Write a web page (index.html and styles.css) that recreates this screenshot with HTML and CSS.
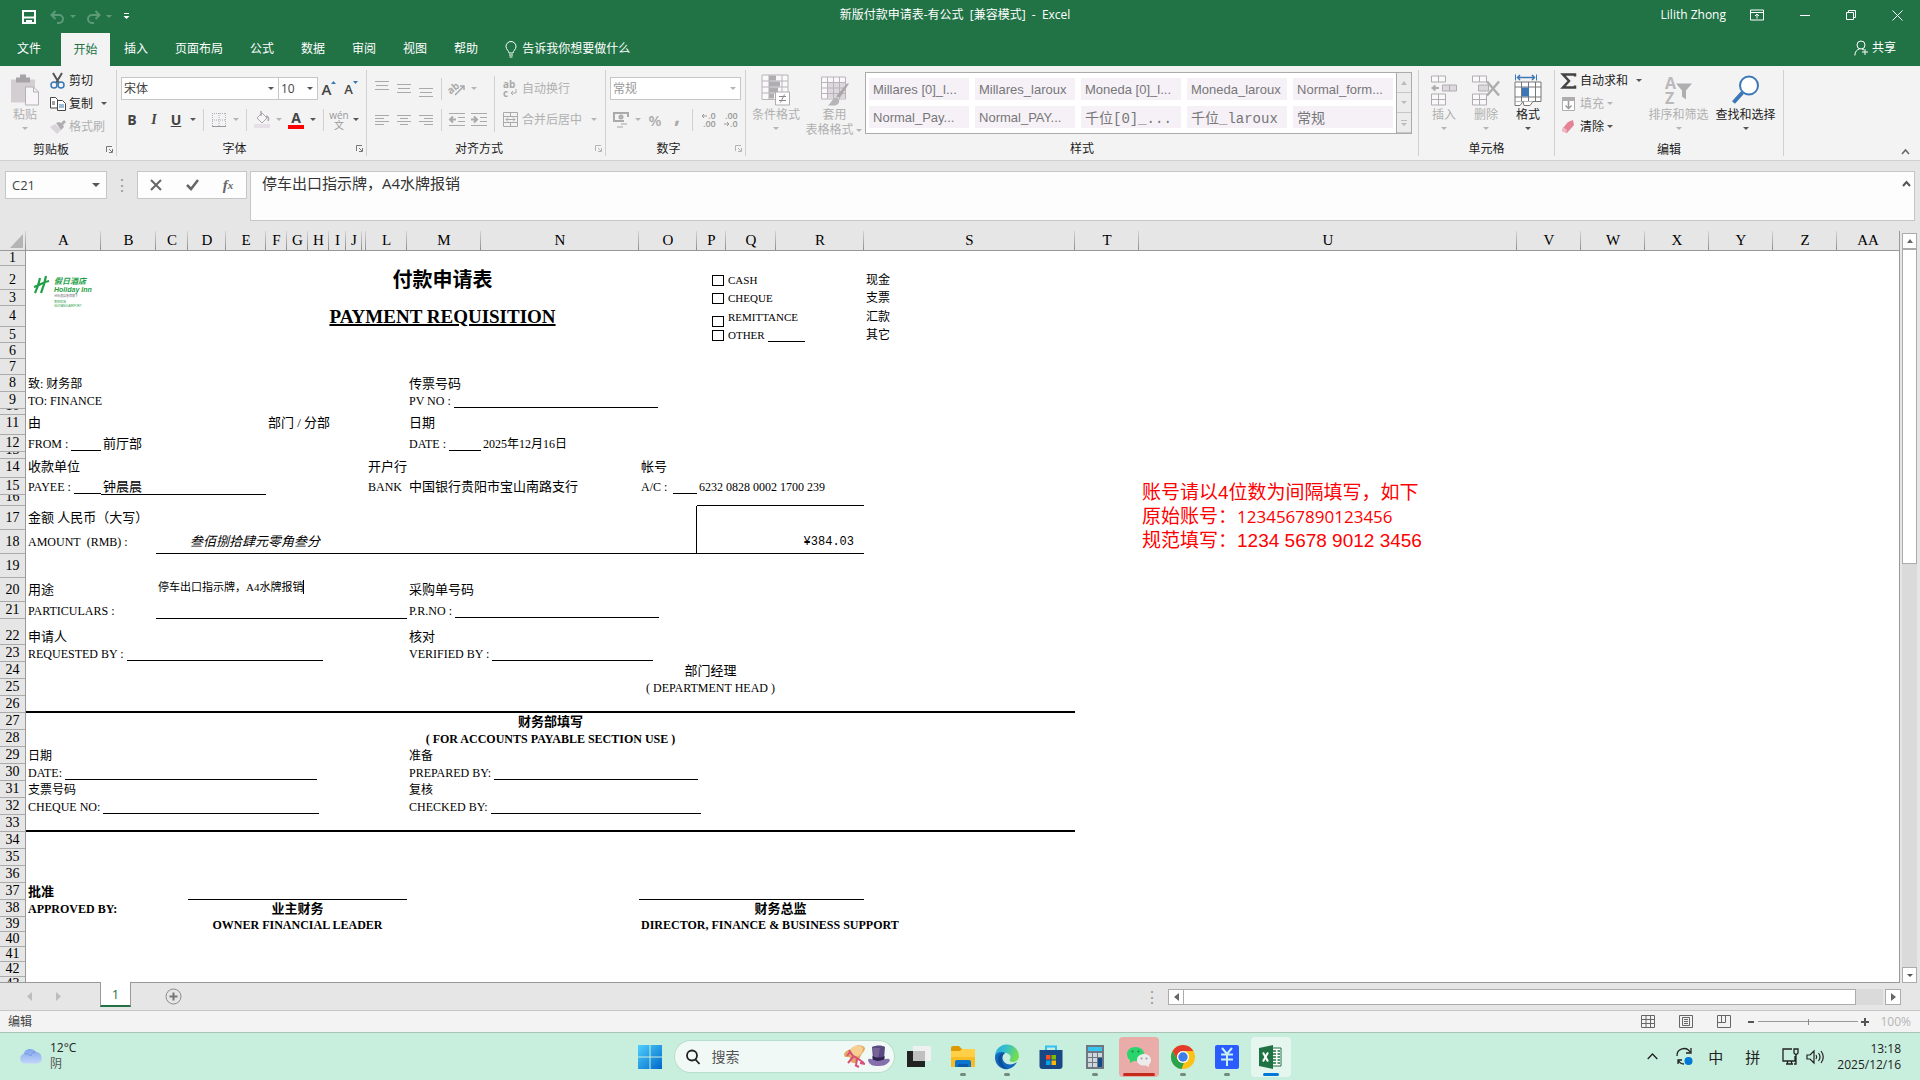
FILE: index.html
```html
<!DOCTYPE html>
<html lang="zh-CN">
<head>
<meta charset="utf-8">
<title>新版付款申请表-有公式 [兼容模式] - Excel</title>
<link rel="stylesheet" href="styles.css">
</head>
<body>
<header class="titlebar">
  <div class="quick">
    <button class="plain" aria-label="保存"><svg width="14" height="14" viewBox="0 0 14 14"><path d="M1 1h12v12H1z" fill="none" stroke="#fff" stroke-width="2"/><path d="M2 7.500h10" stroke="#fff" stroke-width="2"/><path d="M4 10h6v4H8v-2H6v2H4z" fill="#fff"/></svg></button>
    <button class="plain dim" aria-label="撤消"><svg width="15" height="14" viewBox="0 0 15 14"><path d="M5.500 1 1.500 5l4 4M2 5h7a4 4 0 0 1 0 8H7" fill="none" stroke="#5c9a78" stroke-width="2"/></svg><i class="ar"></i></button>
    <button class="plain dim" aria-label="恢复"><svg width="15" height="14" viewBox="0 0 15 14"><path d="m9.500 1 4 4-4 4M13 5H6a4 4 0 0 0 0 8h2" fill="none" stroke="#5c9a78" stroke-width="2"/></svg><i class="ar"></i></button>
    <button class="plain custom" aria-label="自定义快速访问工具栏"><svg width="7" height="7" viewBox="0 0 7 7"><path d="M1 .5h5" stroke="#fff"/><path d="M.5 3h6L3.500 6z" fill="#fff"/></svg></button>
  </div>
  <h1>新版付款申请表-有公式&nbsp; [兼容模式]&nbsp; -&nbsp; Excel</h1>
  <div class="window">
    <span>Lilith Zhong</span>
    <button class="plain" aria-label="功能区显示选项"><svg width="14" height="12" viewBox="0 0 14 12" fill="none" stroke="#fff"><path d="M.5 1h13v10H.5zM.5 3.500h13M7 9.500V5M5 7l2-2 2 2"/></svg></button>
    <button class="plain" aria-label="最小化"><svg width="10" height="10"><path d="M0 5.500h10" stroke="#fff"/></svg></button>
    <button class="plain" aria-label="还原"><svg width="10" height="10" fill="none" stroke="#fff"><path d="M.5 2.500h7v7h-7zM2.500 2V.5h7v7H8"/></svg></button>
    <button class="plain" aria-label="关闭"><svg width="11" height="11"><path d="m.5.5 10 10M10.500.5l-10 10" stroke="#fff"/></svg></button>
  </div>
</header>

<nav class="tabs">
  <button>文件</button><button class="on">开始</button><button>插入</button><button>页面布局</button><button>公式</button><button>数据</button><button>审阅</button><button>视图</button><button>帮助</button>
  <button class="tell"><svg width="12" height="17" viewBox="0 0 12 17" fill="none" stroke="#fff"><path d="M4 12c0-2-3-3.500-3-6.500a5 5 0 0 1 10 0C11 8.500 8 10 8 12zM4 14h4M4.500 16h3"/></svg>告诉我你想要做什么</button>
  <button class="share"><svg width="15" height="16" viewBox="0 0 15 16" fill="none" stroke="#fff"><circle cx="7" cy="5" r="4"/><path d="M.8 15.500C1 11.500 3 9.500 5.500 9M8 9l2 1M11 9v6M8 12h6"/></svg>共享</button>
</nav>

<section class="ribbon">
  <div class="group">
    <div class="body clip">
      <button class="big off paste"><svg width="28" height="32" viewBox="0 0 28 32"><path d="M0 5h24v23H0z" fill="#d2ced2"/><path d="M5 3h4V0h6v3h4v5H5z" fill="#a6a4a6"/><path d="M14.500 12.500h8l5 5v13h-13z" fill="#f8f5f9" stroke="#b4b1b5"/><path d="M22.500 12.500v5h5" fill="none" stroke="#b4b1b5"/></svg><span>粘贴</span><i class="ar"></i></button>
      <div class="stack">
        <button class="row"><svg width="16" height="16" viewBox="0 0 16 16" fill="none"><path d="m3 0 6 10M12 0 6 10" stroke="#555" stroke-width="2"/><circle cx="4" cy="12" r="3" stroke="#3b78b5" stroke-width="1.500"/><circle cx="11" cy="12" r="3" stroke="#3b78b5" stroke-width="1.500"/></svg>剪切</button>
        <button class="row"><svg width="16" height="14" viewBox="0 0 16 14" fill="#fff" stroke="#444"><path d="M.5.5h5l2 2V11H.5zM2 5h3M2 7h3M7.500 3.500h5l3 3v7h-8z"/><path d="M9 8h5M9 10h5" stroke="#3b78b5"/></svg>复制<i class="ar wide"></i></button>
        <button class="row off"><svg width="16" height="14" viewBox="0 0 16 14"><path d="m0 7 5-3 6 6-4 4z" fill="#d9d4da"/><path d="m6 3 3-1 2 1 3-3 2 2-3 3 1 2-3 3z" fill="#b0aeb0"/></svg>格式刷</button>
      </div>
    </div>
    <div class="label"><span>剪贴板</span><button class="launch" aria-label="剪贴板设置"><svg width="7" height="7"><use href="#launch"/></svg></button></div>
  </div>

  <div class="group">
    <div class="body two">
      <div class="line"><span class="combo font"><select aria-label="字体"><option>宋体</option></select><i class="ar"></i></span><span class="combo size"><select aria-label="字号"><option>10</option></select><i class="ar"></i></span>
        <button class="ib" aria-label="增大字号"><span class="grow">A</span><svg width="5" height="3"><path d="M0 3h5L2.500 0z" fill="#3b78b5"/></svg></button>
        <button class="ib" aria-label="减小字号"><span class="shrink">A</span><svg width="5" height="3"><path d="M0 0h5L2.500 3z" fill="#3b78b5"/></svg></button></div>
      <div class="line"><button class="ib b">B</button><button class="ib it">I</button><button class="ib u">U</button><i class="ar"></i><i class="sep"></i>
        <button class="ib" aria-label="边框"><svg width="14" height="14" fill="none" stroke="#b4aeb8" stroke-dasharray="1 1"><path d="M.5 0v13M7 0v13M13.500 0v13M0 .5h14M0 7h14"/><path d="M0 13.500h14" stroke-dasharray="none" stroke="#9a979b"/></svg></button><i class="ar off"></i><i class="sep"></i>
        <button class="ib" aria-label="填充颜色"><svg width="17" height="17" viewBox="0 0 17 17"><path d="M3 7 8 2l5 5-5 5z" fill="#f8f5f9" stroke="#aaa7aa"/><path d="M7 5V0M12 5c3 1 3 3 2 5" fill="none" stroke="#aaa7aa" stroke-width="1.500"/><path d="M0 13h16v4H0z" fill="#e6dfe8"/></svg></button><i class="ar off"></i>
        <button class="ib" aria-label="字体颜色"><span class="fc">A</span></button><i class="ar"></i><i class="sep"></i>
        <button class="ib wen"><span>wén</span><span>文</span></button><i class="ar"></i></div>
    </div>
    <div class="label"><span>字体</span><button class="launch" aria-label="字体设置"><svg width="7" height="7"><use href="#launch"/></svg></button></div>
  </div>

  <div class="group">
    <div class="body cols off">
      <div class="two">
        <div class="line"><button class="ib" aria-label="顶端对齐"><svg width="14" height="16" stroke="#aaa"><path d="M0 .5h14M1 4.500h12M0 8.500h14"/></svg></button><button class="ib" aria-label="垂直居中"><svg width="14" height="16" stroke="#aaa"><path d="M0 3.500h14M1 7.500h12M0 11.500h14"/></svg></button><button class="ib" aria-label="底端对齐"><svg width="14" height="16" stroke="#aaa"><path d="M0 7.500h14M1 11.500h12M0 15.500h14"/></svg></button><i class="sep"></i>
          <button class="ib" aria-label="方向"><svg width="17" height="15" viewBox="0 0 17 15"><text x="-2" y="10" font-size="10" font-weight="700" fill="#aaa" transform="rotate(-40 5 7)">ab</text><path d="m6 14 9-9M11 5h4v4" fill="none" stroke="#aaa" stroke-width="1.500"/></svg></button><i class="ar"></i></div>
        <div class="line"><button class="ib" aria-label="左对齐"><svg width="14" height="12" stroke="#aaa"><path d="M0 1.500h14M0 4.500h9M0 7.500h14M0 10.500h9"/></svg></button><button class="ib" aria-label="居中"><svg width="14" height="12" stroke="#aaa"><path d="M0 1.500h14M3 4.500h8M0 7.500h14M3 10.500h8"/></svg></button><button class="ib" aria-label="右对齐"><svg width="14" height="12" stroke="#aaa"><path d="M0 1.500h14M5 4.500h9M0 7.500h14M5 10.500h9"/></svg></button><i class="sep"></i>
          <button class="ib" aria-label="减少缩进"><svg width="16" height="14" stroke="#aaa" fill="none"><path d="M0 .5h16M9 4.500h7M9 8.500h7M0 12.500h16"/><path d="M7 6.500H1M4 3.500l-3 3 3 3" stroke-width="2"/></svg></button><button class="ib" aria-label="增加缩进"><svg width="16" height="14" stroke="#aaa" fill="none"><path d="M0 .5h16M9 4.500h7M9 8.500h7M0 12.500h16"/><path d="M0 6.500h6M3 3.500l3 3-3 3" stroke-width="2"/></svg></button></div>
      </div>
      <i class="sep tall"></i>
      <div class="two">
        <div class="line"><button class="row"><svg width="15" height="16" viewBox="0 0 15 16"><text x="0" y="7" font-size="10" font-weight="700" fill="#aaa">ab</text><text x="0" y="16" font-size="10" font-weight="700" fill="#aaa">c</text><path d="M13 8v4H8M10 10l-2 2 2 2" fill="none" stroke="#aaa"/></svg>自动换行</button></div>
        <div class="line"><button class="row"><svg width="15" height="15" fill="none" stroke="#aaa"><path d="M.5.5h14v14H.5zM.5 4.500h14M.5 10.500h14M7.500.5v4M7.500 10.500v4M3 7.500h9M5 5.500l-2 2 2 2M10 5.500l2 2-2 2"/></svg>合并后居中<i class="ar wide"></i></button></div>
      </div>
    </div>
    <div class="label"><span>对齐方式</span><button class="launch off" aria-label="对齐设置"><svg width="7" height="7"><use href="#launch"/></svg></button></div>
  </div>

  <div class="group">
    <div class="body two off">
      <div class="line"><span class="combo num"><select aria-label="数字格式"><option>常规</option></select><i class="ar"></i></span></div>
      <div class="line"><button class="ib" aria-label="会计数字格式"><svg width="16" height="16" viewBox="0 0 16 16" fill="none" stroke="#aaa" stroke-width="2"><path d="M11 9H1V1h14v4"/><circle cx="8" cy="5" r="1.500"/><path d="M8 12h6M4 15h6" stroke="#ccc"/></svg></button><i class="ar"></i><button class="ib pct">%</button><button class="ib comma">,</button><i class="sep"></i>
        <button class="ib" aria-label="增加小数位数"><svg width="15" height="16" viewBox="0 0 15 16"><text x="7" y="7" font-size="9" font-weight="600" fill="#999">.0</text><text x="2" y="15" font-size="9" font-weight="600" fill="#999">.00</text><path d="M6 4H1M3 2 1 4l2 2" fill="none" stroke="#999"/></svg></button><button class="ib" aria-label="减少小数位数"><svg width="15" height="16" viewBox="0 0 15 16"><text x="2" y="7" font-size="9" font-weight="600" fill="#999">.00</text><text x="7" y="15" font-size="9" font-weight="600" fill="#999">.0</text><path d="M1 12h5M4 10l2 2-2 2" fill="none" stroke="#999"/></svg></button></div>
    </div>
    <div class="label"><span>数字</span><button class="launch off" aria-label="数字设置"><svg width="7" height="7"><use href="#launch"/></svg></button></div>
  </div>

  <div class="group">
    <div class="body">
      <button class="big off cond"><svg width="30" height="32" viewBox="0 0 30 32"><path d="M1 .5h26V25H1zM1 6.500h26M1 12.500h26M1 18.500h26M8 .5V25M21 .5V25" fill="#faf8fb" stroke="#b8b4b9"/><path d="M8 1h7v5H8zM8 7h11v5H8zM8 13h9v5H8zM8 19h5v5H8z" fill="#b0adb1"/><path d="M14.500 17.500h14v13h-14z" fill="#fff" stroke="#b0adb1"/><path d="M18 22h7M18 26h7M23.500 20l-4 8" stroke="#888"/></svg><span>条件格式</span><i class="ar"></i></button>
      <button class="big off tbl"><svg width="30" height="32" viewBox="0 0 30 32"><path d="M1.500 2.500h24v22h-24z" fill="#faf8fb" stroke="#b8b4b9"/><path d="M8 8h17v16H8z" fill="#dcd8dd"/><path d="M1.500 8h24M1.500 13.500h24M1.500 19h24M7.500 2.500v22M13.500 2.500v22M19.500 2.500v22" stroke="#b8b4b9"/><path d="m29 9-9 14-4-1L27 9z" fill="#aaa7ab"/><path d="M8 31c3-2 4-7 8-8 5 1 4 7-1 8z" fill="#b8b5b9"/></svg><span>套用</span><span>表格格式<i class="ar"></i></span></button>
      <div class="gallery">
        <div class="styles"><button>Millares [0]_l...</button><button>Millares_laroux</button><button>Moneda [0]_l...</button><button>Moneda_laroux</button><button>Normal_form...</button><button>Normal_Pay...</button><button>Normal_PAY...</button><button class="song">千位[0]_...</button><button class="song">千位_laroux</button><button class="song">常规</button></div>
        <div class="scrolls"><button aria-label="上一行"><i class="ar up"></i></button><button aria-label="下一行"><i class="ar"></i></button><button aria-label="其他"><i class="ar over"></i></button></div>
      </div>
    </div>
    <div class="label"><span>样式</span></div>
  </div>

  <div class="group">
    <div class="body cells">
      <button class="big off"><svg width="26" height="30" viewBox="0 0 26 30" fill="#faf8fb" stroke="#b0adb1"><path d="M.5.5h14v6H.5zM7.500.5v6M.5 18.500h14v11H.5zM7.500 18.500v11M.5 24h14"/><path d="M11.500 9.500h14v6h-14zM18.500 9.500v6" fill="#dcd8dd"/><path d="M8 12.500H2M4.500 10l-3 2.500 3 2.500" fill="none" stroke-width="2"/></svg><span>插入</span><i class="ar"></i></button>
      <button class="big off"><svg width="28" height="30" viewBox="0 0 28 30" fill="#faf8fb" stroke="#b0adb1"><path d="M.5.5h14v6H.5zM7.500.5v6M.5 18.500h14v11H.5zM7.500 18.500v11M.5 24h14"/><path d="M6.500 9.500h10v6h-10z" fill="#dcd8dd"/><path d="m15 6 12 14M27 6 15 20" stroke-width="2.500"/></svg><span>删除</span><i class="ar"></i></button>
      <button class="big"><svg width="28" height="32" viewBox="0 0 28 32"><path d="M1.500 0v6M22.500 0v6" stroke="#3b78b5"/><path d="M3 3h18M6 .5 3.500 3 6 5.500M18 .5 20.500 3 18 5.500" fill="none" stroke="#3b78b5" stroke-width="1.500"/><path d="M1 7.500h26v19.500H1zM1 12.500h26M1 22.500h26M7.500 7.500V27M14.500 7.500V27M21.500 7.500V27" fill="#fff" stroke="#777"/><path d="M8 13h7v9H8z" fill="#3b78b5"/><path d="M1 27v4h5l3-4 1 4h6l3-4" fill="#fff" stroke="#777"/></svg><span>格式</span><i class="ar"></i></button>
    </div>
    <div class="label"><span>单元格</span></div>
  </div>

  <div class="group">
    <div class="body edit">
      <div class="stack">
        <button class="row"><svg width="16" height="16"><path d="M14 3.500V1.500H2L8 8l-6 6.500h12v-2" fill="none" stroke="#444" stroke-width="2.500"/></svg>自动求和<i class="ar wide"></i></button>
        <button class="row off"><svg width="16" height="16"><path d="M1.500 1.500h12v13h-12z" fill="#fff" stroke="#b0adb1"/><path d="M1 1h13v4H1z" fill="#b0adb1"/><path d="M7.500 5v8M4.500 9.500l3 3 3-3" fill="none" stroke="#999" stroke-width="1.500"/></svg>填充<i class="ar"></i></button>
        <button class="row"><svg width="16" height="14"><path d="m7 2 5-2 1 5-7 8-5-2 1-3z" fill="#e68296"/><path d="m2 7 4 3-1 3-4-2z" fill="#f0b7c2"/></svg>清除<i class="ar"></i></button>
      </div>
      <button class="big off sort"><svg width="28" height="30" viewBox="0 0 28 30"><text x="0" y="13" font-size="16" font-weight="700" fill="#bbb8bc">A</text><text x="0" y="28" font-size="16" font-weight="700" fill="#bbb8bc">Z</text><path d="M11 8h16l-6 7v9l-4-3v-6z" fill="#b0adb1"/></svg><span>排序和筛选</span><i class="ar"></i></button>
      <button class="big find"><svg width="28" height="30" viewBox="0 0 28 30"><path d="m1.500 27 9-10" stroke="#3b78b5" stroke-width="4"/><circle cx="17" cy="10" r="9" fill="#fff" stroke="#3b78b5" stroke-width="2"/></svg><span>查找和选择</span><i class="ar"></i></button>
    </div>
    <div class="label"><span>编辑</span></div>
  </div>
  <button class="collapse" aria-label="折叠功能区"><svg width="9" height="6"><path d="m1 5 3.500-4L8 5" fill="none" stroke="#666" stroke-width="1.500"/></svg></button>
</section>

<section class="formula">
  <div class="namebox"><input value="C21" aria-label="名称框"><i class="ar lg"></i></div>
  <span class="dots">⋮</span>
  <div class="fx">
    <button aria-label="取消"><svg width="12" height="12"><path d="m1 1 10 10M11 1 1 11" stroke="#666" stroke-width="2"/></svg></button>
    <button aria-label="输入"><svg width="13" height="12"><path d="m1 6 4 4 7-9" fill="none" stroke="#666" stroke-width="2.500"/></svg></button>
    <button aria-label="插入函数" class="fn">f<sub>x</sub></button>
  </div>
  <div class="bar"><textarea aria-label="编辑栏" rows="2">停车出口指示牌，A4水牌报销</textarea><button class="plain" aria-label="折叠编辑栏"><svg width="9" height="6"><path d="m1 5 3.500-4L8 5" fill="none" stroke="#555" stroke-width="2"/></svg></button></div>
</section>

<main class="work">
  <div class="sheet">
    <table>
      <colgroup><col class="w26"><col class="w75"><col class="w55"><col class="w32"><col class="w38"><col class="w40"><col class="w21"><col class="w21"><col class="w21"><col class="w17"><col class="w16"><col class="w4"><col class="w41"><col class="w74"><col class="w158"><col class="w58"><col class="w29"><col class="w50"><col class="w88"><col class="w211"><col class="w64"><col class="w378"><col class="w64"><col class="w64"><col class="w64"><col class="w64"><col class="w64"><col></colgroup>
      <thead><tr><th class="corner"><svg width="13" height="14"><path d="M13 0v14H0z" fill="#b4b4b4"/></svg></th><th>A</th><th>B</th><th>C</th><th>D</th><th>E</th><th>F</th><th>G</th><th>H</th><th>I</th><th>J</th><th></th><th>L</th><th>M</th><th>N</th><th>O</th><th>P</th><th>Q</th><th>R</th><th>S</th><th>T</th><th>U</th><th>V</th><th>W</th><th>X</th><th>Y</th><th>Z</th><th class="last">AA</th></tr></thead>
      <tbody>
      <tr class="h15"><th><div>1</div></th><td colspan="27"></td></tr>
      <tr class="h24 drop"><th><div>2</div></th><td colspan="3"></td><td colspan="12" class="mid"><div class="title">付款申请表</div></td><td class="tick"><div><input type="checkbox" id="cash"></div></td><td colspan="2"><div><label for="cash" class="sm">CASH</label></div></td><td><div class="z12">现金</div></td><td colspan="8"></td></tr>
      <tr class="h16"><th><div>3</div></th><td colspan="15"></td><td class="tick"><div><input type="checkbox" id="cheque"></div></td><td colspan="2"><div><label for="cheque" class="sm">CHEQUE</label></div></td><td><div class="z12">支票</div></td><td colspan="8"></td></tr>
      <tr class="h21"><th><div>4</div></th><td colspan="3"></td><td colspan="12" class="mid"><div class="subtitle">PAYMENT REQUISITION</div></td><td class="tick low"><div><input type="checkbox" id="remit"></div></td><td colspan="2"><div><label for="remit" class="sm">REMITTANCE</label></div></td><td><div class="z12">汇款</div></td><td colspan="8"></td></tr>
      <tr class="h16"><th><div>5</div></th><td colspan="15"></td><td class="tick"><div><input type="checkbox" id="other"></div></td><td colspan="2"><div><label for="other" class="sm">OTHER</label><i class="fill f37"></i></div></td><td><div class="z12">其它</div></td><td colspan="8"></td></tr>
      <tr class="h16"><th><div>6</div></th><td colspan="27"></td></tr>
      <tr class="h16"><th><div>7</div></th><td colspan="27"></td></tr>
      <tr class="h17"><th><div>8</div></th><td colspan="12"><div class="z12">致: 财务部</div></td><td colspan="15"><div class="zh">传票号码</div></td></tr>
      <tr class="h17"><th><div>9</div></th><td colspan="12"><div>TO: FINANCE</div></td><td colspan="15"><div>PV NO :<i class="fill f204"></i></div></td></tr>
      <tr class="h6 end"><th><div>10</div></th><td colspan="27"></td></tr>
      <tr class="h20 top"><th><div>11</div></th><td colspan="5"><div class="zh">由</div></td><td colspan="7"><div class="zh">部门 / 分部</div></td><td colspan="15"><div class="zh">日期</div></td></tr>
      <tr class="h17"><th><div>12</div></th><td><div>FROM :<i class="fill"></i></div></td><td colspan="11"><div class="zh">前厅部</div></td><td><div>DATE :<i class="fill"></i></div></td><td colspan="14"><div>2025年12月16日</div></td></tr>
      <tr class="h7 end"><th><div>13</div></th><td colspan="27"></td></tr>
      <tr class="h19 top"><th><div>14</div></th><td colspan="11"><div class="zh">收款单位</div></td><td colspan="3"><div class="zh">开户行</div></td><td colspan="13"><div class="zh">帐号</div></td></tr>
      <tr class="h17"><th><div>15</div></th><td><div>PAYEE :<i class="fill"></i></div></td><td colspan="4" class="bb"><div class="zh">钟晨晨</div></td><td colspan="6"></td><td><div>BANK</div></td><td colspan="2"><div class="zh">中国银行贵阳市宝山南路支行</div></td><td><div>A/C :&nbsp;<i class="fill"></i></div></td><td colspan="12"><div>6232 0828 0002 1700 239</div></td></tr>
      <tr class="h11 end"><th><div>16</div></th><td colspan="15"></td><td colspan="3" class="bb"></td><td colspan="9"></td></tr>
      <tr class="h24"><th><div>17</div></th><td colspan="15" class="br"><div class="zh">金额 人民币（大写）</div></td><td colspan="12"></td></tr>
      <tr class="h24"><th><div>18</div></th><td colspan="2"><div>AMOUNT&nbsp; (RMB) :</div></td><td class="bb"></td><td colspan="12" class="bb br"><div class="words">叁佰捌拾肆元零角叁分</div></td><td colspan="3" class="bb sum"><div>¥384.03</div></td><td colspan="9"></td></tr>
      <tr class="h24"><th><div>19</div></th><td colspan="27"></td></tr>
      <tr class="h24"><th><div>20</div></th><td colspan="2"><div class="zh">用途</div></td><td colspan="10" rowspan="2" class="bb editing"><div>停车出口指示牌，A4水牌报销<i class="caret"></i></div></td><td colspan="15"><div class="zh">采购单号码</div></td></tr>
      <tr class="h17"><th><div>21</div></th><td colspan="2"><div>PARTICULARS :</div></td><td colspan="15"><div>P.R.NO :<i class="fill f204"></i></div></td></tr>
      <tr class="h26 end"><th><div>22</div></th><td colspan="12"><div class="zh">申请人</div></td><td colspan="15"><div class="zh">核对</div></td></tr>
      <tr class="h17"><th><div>23</div></th><td colspan="12"><div>REQUESTED BY :<i class="fill f196"></i></div></td><td colspan="15"><div>VERIFIED BY :<i class="fill f161"></i></div></td></tr>
      <tr class="h17"><th><div>24</div></th><td colspan="9"></td><td colspan="10" class="mid"><div class="zh">部门经理</div></td><td colspan="8"></td></tr>
      <tr class="h17"><th><div>25</div></th><td colspan="9"></td><td colspan="10" class="mid"><div>( DEPARTMENT HEAD )</div></td><td colspan="8"></td></tr>
      <tr class="h17"><th><div>26</div></th><td colspan="19" class="bb2"></td><td colspan="8"></td></tr>
      <tr class="h17"><th><div>27</div></th><td colspan="19" class="mid"><div class="zh strong">财务部填写</div></td><td colspan="8"></td></tr>
      <tr class="h17"><th><div>28</div></th><td colspan="19" class="mid"><div class="strong">( FOR ACCOUNTS PAYABLE SECTION USE )</div></td><td colspan="8"></td></tr>
      <tr class="h17"><th><div>29</div></th><td colspan="12"><div class="z12">日期</div></td><td colspan="15"><div class="z12">准备</div></td></tr>
      <tr class="h17"><th><div>30</div></th><td colspan="12"><div>DATE:<i class="fill f252"></i></div></td><td colspan="15"><div>PREPARED BY:<i class="fill f204"></i></div></td></tr>
      <tr class="h17"><th><div>31</div></th><td colspan="12"><div class="z12">支票号码</div></td><td colspan="15"><div class="z12">复核</div></td></tr>
      <tr class="h17"><th><div>32</div></th><td colspan="12"><div>CHEQUE NO:<i class="fill f216"></i></div></td><td colspan="15"><div>CHECKED BY:<i class="fill f210"></i></div></td></tr>
      <tr class="h17"><th><div>33</div></th><td colspan="19" class="bb2"></td><td colspan="8"></td></tr>
      <tr class="h17"><th><div>34</div></th><td colspan="27"></td></tr>
      <tr class="h17"><th><div>35</div></th><td colspan="27"></td></tr>
      <tr class="h17"><th><div>36</div></th><td colspan="27"></td></tr>
      <tr class="h17"><th><div>37</div></th><td colspan="3"><div class="zh strong">批准</div></td><td colspan="9" class="bb"></td><td colspan="2"></td><td colspan="4" class="bb"></td><td colspan="9"></td></tr>
      <tr class="h17"><th><div>38</div></th><td colspan="3"><div class="strong">APPROVED BY:</div></td><td colspan="9" class="mid"><div class="zh strong">业主财务</div></td><td colspan="3"></td><td colspan="3" class="mid"><div class="zh strong">财务总监</div></td><td colspan="9"></td></tr>
      <tr class="h15"><th><div>39</div></th><td colspan="3"></td><td colspan="9" class="mid"><div class="strong">OWNER FINANCIAL LEADER</div></td><td colspan="2"></td><td colspan="13"><div class="strong">DIRECTOR, FINANCE &amp; BUSINESS SUPPORT</div></td></tr>
      <tr class="h15"><th><div>40</div></th><td colspan="27"></td></tr>
      <tr class="h15"><th><div>41</div></th><td colspan="27"></td></tr>
      <tr class="h15"><th><div>42</div></th><td colspan="27"></td></tr>
      <tr class="h15"><th><div>43</div></th><td colspan="27"></td></tr>
      </tbody>
    </table>
    <svg class="logo" width="62" height="32" viewBox="0 0 62 32" role="img" aria-label="Holiday Inn">
      <path d="M6 2C5 7 3 13 1 17M12 0c-1 6-3 12-5 17M0 11c5-1 8-5 15-6" fill="none" stroke="#1fa047" stroke-width="2.200"/>
      <g fill="#1fa047" font-family="Liberation Sans, Noto Sans CJK SC, sans-serif"><text x="20" y="8" font-size="8" font-weight="700" font-style="italic">假日酒店</text><text x="20" y="16" font-size="7" font-weight="700" font-style="italic">Holiday Inn</text><text x="20" y="21" font-size="3" fill="#777">洲际酒店集团旗下</text><text x="20" y="27" font-size="3">贵阳机场</text><text x="20" y="31" font-size="3">GUIYANG AIRPORT</text></g>
    </svg>
    <div class="note"><p>账号请以<b>4</b>位数为间隔填写，如下</p><p>原始账号：<span>1234567890123456</span></p><p>规范填写：<b>1234 5678 9012 3456</b></p></div>
  </div>
  <div class="vscroll"><button aria-label="向上滚动"><i class="ar up"></i></button><div class="thumb"></div><div class="track"></div><button aria-label="向下滚动"><i class="ar"></i></button></div>
</main>

<footer class="sheettabs">
  <button class="plain" aria-label="上一张"><svg width="5" height="9"><path d="M5 0v9L0 4.500z" fill="#bdbdbd"/></svg></button>
  <button class="plain" aria-label="下一张"><svg width="5" height="9"><path d="M0 0v9l5-4.500z" fill="#bdbdbd"/></svg></button>
  <button class="sheettab">1</button>
  <button class="plain add" aria-label="新工作表"><svg width="17" height="17" fill="none"><circle cx="8.500" cy="8.500" r="7.500" stroke="#8a8a8a"/><path d="M4.500 8.500h8M8.500 4.500v8" stroke="#777" stroke-width="2"/></svg></button>
  <span class="dots">⋮</span>
  <div class="hscroll"><button aria-label="向左滚动"><svg width="5" height="8"><path d="M5 0v8L0 4z" fill="#666"/></svg></button><div class="thumb"></div><div class="track"></div><button aria-label="向右滚动"><svg width="5" height="8"><path d="M0 0v8l5-4z" fill="#666"/></svg></button></div>
</footer>

<footer class="status">
  <span class="mode">编辑</span>
  <button class="plain view" aria-label="普通"><svg width="14" height="13" fill="none" stroke="#666"><path d="M.5.5h13v12H.5zM.5 4.500h13M.5 8.500h13M5 .5v12M9.500.5v12"/></svg></button>
  <button class="plain view" aria-label="页面布局"><svg width="14" height="13" fill="none" stroke="#666"><path d="M.5.5h13v12H.5zM3.500 2.500h7v8h-7zM5 4.500h4M5 6.500h4M5 8.500h4"/></svg></button>
  <button class="plain view" aria-label="分页预览"><svg width="14" height="13" fill="none" stroke="#666"><path d="M.5.5h13v12H.5zM.5 7.500h8v-7M4.500.5v7"/></svg></button>
  <button class="plain zoom" aria-label="缩小"><svg width="8" height="8"><path d="M1 4h6" stroke="#555" stroke-width="2"/></svg></button>
  <input type="range" min="0" max="100" value="50" aria-label="缩放">
  <button class="plain zoom" aria-label="放大"><svg width="8" height="8"><path d="M0 4h8M4 0v8" stroke="#555" stroke-width="2"/></svg></button>
  <span class="pc">100%</span>
</footer>

<footer class="taskbar">
  <button class="weather"><svg width="24" height="17" viewBox="0 0 24 17"><defs><linearGradient id="cl" x1="0" y1="0" x2="0" y2="1"><stop offset="0" stop-color="#7fa4ec"/><stop offset="1" stop-color="#c3d6fa"/></linearGradient></defs><path d="M5 16.500a5 5 0 0 1-.5-9.500A7 7 0 0 1 17 5a6 6 0 0 1 2 11.500z" fill="url(#cl)"/><path d="M6 7c2-1 4 0 5 2M17 5c-3 0-5 2-5 4" stroke="#6f96e4" fill="none"/></svg><span>12°C<br><em>阴</em></span></button>
  <div class="apps">
    <button aria-label="开始"><svg width="24" height="24"><defs><linearGradient id="wn" x1="0" y1="0" x2="1" y2="1"><stop offset="0" stop-color="#4fd0ff"/><stop offset="1" stop-color="#0067c8"/></linearGradient></defs><path d="M0 0h11.500v11.500H0zM12.500 0H24v11.500H12.500zM0 12.500h11.500V24H0zM12.500 12.500H24V24H12.500z" fill="url(#wn)"/></svg></button>
    <label class="search"><svg width="14" height="16" fill="none" stroke="#222" stroke-width="1.800"><circle cx="6" cy="6.500" r="5"/><path d="m9.500 10.500 4 4.500"/></svg><input type="text" placeholder="搜索"><svg width="46" height="24" viewBox="0 0 46 24"><path d="M0 9C1 5 7 5 10 2c3-3 10-2 11 1 0 3-2 4-4 7-2 5-4 9-8 8C5 17 7 13 5 12 2 12 0 13 0 9z" fill="#e3a962"/><path d="M6 5c2-5 10-6 13-2 0 4-3 8-7 9-4-1-6-4-6-7z" fill="#f6cf91"/><path d="m5 5 4 6 4 2M6 7l-3 4M9 12l-5 6M13 13l-1 8M13 13l7 5M16 18l5 1M11 20l4 2" fill="none" stroke="#d9507a" stroke-width="2"/><path d="M28 2c4-2 10-2 13 0l-1 12c-4 2-8 2-11 0z" fill="#5b4a82"/><path d="M29 3h7l-2 11h-4z" fill="#776598"/><path d="M28.500 11c4 2 8 2 12 0v4c-4 2-8 2-12 0z" fill="#2f2450"/><path d="M24 15c1-3 4 0 10 1 6-1 10-4 12-1-2 5-7 6-12 6s-9-1-10-6z" fill="#8570ab"/></svg></label>
    <button aria-label="任务视图"><svg width="24" height="24" viewBox="0 0 24 24"><path d="M0 6h18v16H0z" fill="#222"/><path d="M6 1h18v15H6z" fill="#f0f0f0"/><path d="M6 6h12v10H6z" fill="#bfc0bf"/></svg></button>
    <button class="run" aria-label="文件资源管理器"><svg width="24" height="24"><path d="M0 3q0-2 2-2h6l3 3h11q2 0 2 2v3H0z" fill="#dc9a07"/><path d="M0 6h9l2-2h13v18H0z" fill="#ffcf48"/><path d="M0 12h24v10H0z" fill="#f9bd24"/><path d="M4 22v-5q0-2 2-2h12q2 0 2 2v5z" fill="#0c76ce"/><path d="M7 19h10v3H7z" fill="#0a5aa8"/></svg></button>
    <button class="run" aria-label="Edge"><svg width="24" height="24" viewBox="0 0 24 24"><defs><linearGradient id="eg" x1="0" y1="0" x2="1" y2=".3"><stop offset="0" stop-color="#2aa8e8"/><stop offset=".5" stop-color="#35c1c9"/><stop offset="1" stop-color="#74dc50"/></linearGradient></defs><path d="M0 12A12 12 0 0 1 24 11c0 4-3 6-6 6-3 0-4-1-3-3 2-3-1-6-5-6-5 0-9 2-10 4z" fill="url(#eg)"/><path d="M0 12c1-5 7-6 10-4-4 2-3 9 2 11 4 1 7 0 10-2-3 6-9 8-13 7C3 22 0 18 0 12z" fill="#1268bd"/><path d="M10 8c-6 4-3 13 3 16C6 24 3 19 3 15c0-4 3-7 7-7z" fill="#0c4f9c"/></svg></button>
    <button aria-label="Microsoft Store"><svg width="24" height="24"><path d="M7 7V1.500h10V7" fill="none" stroke="#31c0f4" stroke-width="2"/><path d="M.5 5h23v16q0 3-3 3h-17q-3 0-3-3z" fill="#174784"/><path d="M7 10h4.500v4.500H7z" fill="#f25022"/><path d="M12.500 10H17v4.500h-4.500z" fill="#7fba00"/><path d="M7 15.500h4.500V20H7z" fill="#00a4ef"/><path d="M12.500 15.500H17V20h-4.500z" fill="#ffb900"/></svg></button>
    <button class="run" aria-label="计算器"><svg width="18" height="24"><path d="M0 0h18v24H0z" fill="#6d7883"/><path d="M2 2h14v4H2z" fill="#37c5f0"/><path d="M2 8h4v4H2zM7 8h4v4H7zM12 8h4v4h-4zM2 13h4v4H2zM7 13h4v4H7zM2 18h4v4H2zM7 18h4v4H7z" fill="#cfd6dc"/><path d="M12 13h4v9h-4z" fill="#114a8a"/></svg></button>
    <button class="wechat" aria-label="微信"><svg width="24" height="22"><path d="M8.500 1C13.500 1 17 4 17 8s-3.500 7-8.500 7l-2 0L3 17v-3C1 13 0 10.500 0 8c0-4 3.500-7 8.500-7z" fill="#2bd46c"/><circle cx="5.500" cy="5.500" r="1" fill="#14803d"/><circle cx="11.500" cy="5.500" r="1" fill="#14803d"/><path d="M17 8c4 0 7 2.500 7 6 0 2-1 3.500-2 4.500V21l-3-1.500h-2c-4 0-7-2-7-5.500s3-6 7-6z" fill="#ececec"/><circle cx="14.500" cy="12.500" r="1" fill="#999"/><circle cx="19.500" cy="12.500" r="1" fill="#999"/></svg></button>
    <button class="run" aria-label="Chrome"><svg width="24" height="24" viewBox="0 0 24 24"><circle cx="12" cy="12" r="12" fill="#fbc116"/><path d="M1.600 6A12 12 0 0 1 22.400 6H12a6 6 0 0 0-5.200 9z" fill="#e33b2e"/><path d="M1.600 6 6.800 15a6 6 0 0 0 6 2.900L10.500 24A12 12 0 0 1 1.600 6z" fill="#2ba24c"/><circle cx="12" cy="12" r="6" fill="#fff"/><circle cx="12" cy="12" r="4.700" fill="#3b7de9"/></svg></button>
    <button class="run" aria-label="财务"><svg width="24" height="24"><path d="M0 2q0-2 2-2h20q2 0 2 2v20q0 2-2 2H2q-2 0-2-2z" fill="#2b5cff"/><path d="m7 3 5 6 5-6M6 9.500h12M6 14.500h12M12 9v12" fill="none" stroke="#c9f0ef" stroke-width="2"/></svg></button>
    <button class="excel" aria-label="Excel"><svg width="24" height="24"><path d="M12 3h10v18H12z" fill="#fff" stroke="#1f7244"/><path d="M14 6h3M18.500 6H21M14 9h3M18.500 9H21M14 12h3M18.500 12H21M14 15h3M18.500 15H21M14 18h3M18.500 18H21" stroke="#1f7244" stroke-width="1.500"/><path d="m0 3 14-3v24L0 21z" fill="#1f7244"/><path d="m4 7.500 5 9M9 7.500l-5 9" stroke="#fff" stroke-width="2"/></svg></button>
  </div>
  <div class="tray">
    <button aria-label="显示隐藏的图标"><svg width="11" height="7"><path d="m.7 6 4.800-5 4.800 5" fill="none" stroke="#222" stroke-width="1.300"/></svg></button>
    <button class="sync" aria-label="更新"><svg width="18" height="18" viewBox="0 0 18 18" fill="none" stroke="#222" stroke-width="1.300"><path d="M1 8a7 7 0 0 1 13-4M15 0v5h-5M2 16v-4h4M2 12c1 2 3 4 6 4"/><circle cx="12.500" cy="13" r="4" fill="#0078d7" stroke="none"/></svg></button>
    <button class="lang">中</button><button>拼</button>
    <button aria-label="网络"><svg width="17" height="17" fill="none" stroke="#222" stroke-width="1.300"><path d="M10 1H1v12h12V8M4 16h7M5.500 13v3M9.500 13v3M12 1h4v4l-2 2-2-2zM14 7v9h-2"/></svg></button>
    <button class="volume" aria-label="音量"><svg width="18" height="14" fill="none" stroke="#222" stroke-width="1.200"><path d="M1 5v4h3l4 4V1L4 5zM10 5q1.500 2 0 4M12.500 3q3 4 0 8M15 1q4.500 6 0 12"/></svg></button>
    <time>13:18<br>2025/12/16</time>
  </div>
</footer>
<svg width="0" height="0" class="defs"><symbol id="launch" viewBox="0 0 7 7"><path d="M.5 6V.5H6M3 3l3 3M6.500 3v3.500H3" fill="none" stroke="currentColor"/></symbol></svg>
</body>
</html>
```
FILE: styles.css
```css
* { box-sizing: border-box; }
body {
  margin: 0; height: 100vh; display: flex; flex-direction: column; overflow: hidden;
  background: #e6e6e6; color: #222;
  font: 12px/16px "Open Sans", "Noto Sans CJK SC", sans-serif;
}
button, input, select, textarea { font: inherit; color: inherit; border: 0; background: none; padding: 0; margin: 0; }
svg { flex: none; display: block; overflow: visible; }
.defs { position: absolute; }
.plain { display: flex; align-items: center; }

/* small drop-down arrows */
.ar { display: inline-flex; width: 12px; justify-content: center; align-items: center; flex: none; }
.ar::before { content: ""; border: 3px solid transparent; border-top: 3px solid #555; border-bottom: 0; }
.ar.up::before { border-top: 0; border-bottom: 4px solid #666; }
.ar.lg::before { border-width: 4px 4px 0; }
.off .ar::before, .ar.off::before { border-top-color: #b5b5b5; }
.off { color: #b0b0b0; }

/* title bar */
.titlebar { display: grid; grid-template-columns: 1fr auto 1fr; align-items: start; height: 33px; flex: none; background: #217346; color: #fff; }
.titlebar h1 { margin: 0; padding-right: 10px; font-size: 12px; font-weight: 400; line-height: 30px; }
.quick { display: flex; align-items: center; padding-left: 22px; gap: 14px; height: 33px; }
.dim { gap: 3px; }
.dim + .dim { margin-left: -6px; }
.dim .ar::before { border-top-color: #5c9a78; }
.custom { margin-left: -5px; }
.dim .ar { width: 10px; }
.window { display: flex; justify-content: flex-end; align-items: center; height: 30px; padding-right: 17px; gap: 36px; }
.window span { margin-right: -12px; }

/* ribbon tabs */
.tabs { display: flex; height: 33px; flex: none; background: #217346; color: #fff; padding-left: 5px; }
.tabs button { padding: 0 14px; margin-right: -1px; height: 32px; line-height: 32px; }
.tabs button:first-child { padding: 0 12px; margin-right: 8px; }
.tabs .on { background: #f3f3f3; color: #217346; padding: 0 12px; width: 49px; height: 33px; margin-right: 0; }
.tabs .tell { display: flex; align-items: center; gap: 5px; }
.tabs .share { display: flex; align-items: center; gap: 3px; margin-left: auto; padding: 0 25px 2px 0; }

/* ribbon */
.ribbon { display: flex; flex: none; height: 95px; background: #f3f3f3; border-bottom: 1px solid #d0d0d0; padding-top: 3px; }
.group { display: flex; flex-direction: column; padding-right: 1px; flex: none; background: linear-gradient(#d0d0d0, #d0d0d0) right 1px / 1px 86px no-repeat; background-position: right 1px; }
.body { display: flex; height: 69px; }
.label { display: flex; line-height: 23px; height: 23px; color: #222; }
.label span { flex: 1; text-align: center; }
.launch { width: 14px; padding-right: 3px; display: flex; align-items: center; justify-content: flex-end; color: #777; }
.launch.off { color: #b5b5b5; }
.big { display: flex; flex-direction: column; align-items: center; line-height: 15px; padding-top: 5px; white-space: nowrap; }
.big > svg { height: 33px; }
.big > .ar { height: 13px; }
.paste { width: 50px; }
.cond { width: 60px; }
.tbl { width: 57px; }
.tbl .ar { vertical-align: middle; width: 10px; }
.stack { display: flex; flex-direction: column; }
.row { display: flex; align-items: center; height: 23px; gap: 4px; white-space: nowrap; text-align: left; }
.row .ar { margin-left: -3px; }
.row .ar.wide { margin-left: 2px; }
.clip { padding-right: 18px; }
.clip .row { width: 48px; gap: 3px; }
.two { flex-direction: column; padding: 8px 4px 0; gap: 8px; display: flex; }
.line { display: flex; align-items: center; height: 23px; }
.cols .two { padding-right: 0; }
.cols .two:last-child { padding-right: 5px; }
.ib { width: 22px; height: 22px; display: flex; align-items: center; justify-content: center; font-size: 14px; color: #444; }
.off .ib { color: #aaa; }
.sep { width: 9px; height: 22px; background: linear-gradient(#d0d0d0, #d0d0d0) center / 1px 100% no-repeat; }
.sep.tall { height: 56px; margin-top: 7px; }
.b, .u, .fc { font-weight: 700; }
.it { font: italic 700 14px "Liberation Serif", serif; }
.u { text-decoration: underline; }
.grow { font-size: 15px; font-weight: 600; }
.shrink { font-size: 13px; font-weight: 600; }
.grow + svg, .shrink + svg { align-self: flex-start; margin-top: 3px; }
.fc { line-height: 14px; border-bottom: 4px solid #f00; padding: 0 3px; }
.wen { flex-direction: column; font-size: 10px; line-height: 10px; color: #999; }
.pct { font-size: 15px; font-weight: 600; }
.comma { font-size: 22px; font-weight: 700; line-height: 10px; padding-bottom: 12px; }
.combo { display: flex; height: 23px; background: #fff; border: 1px solid #c6c6c6; }
.combo select { appearance: none; flex: 1; min-width: 0; padding-left: 2px; outline: 0; color: #444; }
.off .combo select { color: #999; opacity: 1; }
.combo .ar { width: 14px; }
.font { width: 158px; }
.size { width: 40px; margin-left: -1px; }
.num { width: 131px; }
.gallery { display: flex; height: 62px; margin: 3px 6px 0 2px; border: 1px solid #ababab; background: #fff; }
.styles { display: grid; grid-template-columns: repeat(5, 100px); grid-auto-rows: 22px; gap: 6px; padding: 5px 3px; }
.styles button { background: #f5f1f7; color: #777; font: 13px "Liberation Sans", sans-serif; text-align: left; padding-left: 4px; white-space: nowrap; }
.styles .song { font: 14px "Liberation Mono", "Noto Sans CJK SC", monospace; }
.scrolls { display: grid; grid-template-rows: 1fr 1fr 1fr; width: 15px; border-left: 1px solid #ababab; }
.scrolls button { background: #ececec; border-bottom: 1px solid #c6c6c6; display: flex; align-items: center; justify-content: center; }
.scrolls .ar::before { border-top-color: #bbb; }
.scrolls .up::before { border-bottom-color: #bbb; }
.scrolls .over { border-top: 1px solid #bbb; padding-top: 2px; width: 6px; }
.cells { padding: 0 5px 0 4px; }
.cells .big { width: 42px; }
.edit { padding: 0 4px 0 6px; }
.edit .stack { width: 84px; }
.edit .row { gap: 3px; }
.sort, .find { width: 67px; }
.collapse { margin: 0 10px 5px auto; align-self: flex-end; }

/* formula bar */
.formula { display: flex; align-items: flex-start; flex: none; padding: 10px 5px 10px; }
.namebox { display: flex; width: 102px; height: 28px; background: #fdfdfd; border: 1px solid #c6c6c6; }
.namebox input { flex: 1; min-width: 0; padding-left: 6px; font-size: 13px; color: #444; }
.namebox .ar { width: 20px; }
.dots { width: 30px; text-align: center; line-height: 28px; font-size: 16px; color: #999; }
.fx { display: flex; width: 110px; height: 28px; background: #fdfdfd; border: 1px solid #c6c6c6; margin-right: 3px; }
.fx button { flex: 1; display: flex; align-items: center; justify-content: center; }
.fn { font: italic 700 15px "Liberation Serif", serif; color: #666; }
.fn sub { font-size: 11px; }
.bar { flex: 1; display: flex; align-items: flex-start; height: 50px; background: #fdfdfd; border: 1px solid #c6c6c6; }
.bar textarea { flex: 1; height: 48px; resize: none; padding: 0 11px; font: 15px/22px "Open Sans", "Noto Sans CJK SC", sans-serif; color: #333; outline: 0; }
.bar .plain { padding: 9px 3px; }

/* worksheet */
.work { flex: 1; min-height: 0; display: flex; }
.sheet { flex: 1; position: relative; overflow: hidden; border-right: 1px solid #999; border-bottom: 1px solid #999; background: #fff; }
.sheet table { width: 100%; table-layout: fixed; border-collapse: separate; border-spacing: 0; font: 12px/16px "Liberation Serif", "Noto Sans CJK SC", serif; color: #000; }
.sheet th, .sheet td { padding: 0; white-space: nowrap; }
.sheet th { font-weight: 400; font-size: 14px; background-color: #e6e6e6; }
.sheet thead th { height: 20px; line-height: 19px; font-size: 15px; border-bottom: 1px solid #999; background: linear-gradient(#d4d4d4, #8c8c8c) right / 1px 100% no-repeat #e6e6e6; }
.sheet thead .last { background: #e6e6e6; }
.corner svg { margin: 0 3px 0 auto; }
tbody th { border-right: 1px solid #999; }
th div { height: var(--h); border-bottom: 1px solid #ababab; overflow: hidden; display: flex; align-items: center; justify-content: center; }
td div { height: var(--h); display: flex; align-items: center; padding-left: 2px; text-align: left; }
tbody tr { height: var(--h); }
.end div { align-items: flex-end; }
.top div { align-items: flex-start; }
.drop div { padding-top: 4px; }
.h6 { --h: 6px; } .h7 { --h: 7px; } .h11 { --h: 11px; } .h15 { --h: 15px; } .h16 { --h: 16px; } .h17 { --h: 17px; }
.h19 { --h: 19px; } .h20 { --h: 20px; } .h21 { --h: 21px; } .h24 { --h: 24px; } .h26 { --h: 26px; }
.w4 { width: 4px; } .w16 { width: 16px; } .w17 { width: 17px; } .w21 { width: 21px; } .w26 { width: 26px; } .w29 { width: 29px; }
.w32 { width: 32px; } .w38 { width: 38px; } .w40 { width: 40px; } .w41 { width: 41px; } .w50 { width: 50px; } .w55 { width: 55px; }
.w58 { width: 58px; } .w64 { width: 64px; } .w74 { width: 74px; } .w75 { width: 75px; } .w88 { width: 88px; } .w158 { width: 158px; }
.w211 { width: 211px; } .w378 { width: 378px; }
/* blank lines to write on */
.fill { flex: 1; align-self: flex-end; height: 1px; margin: 0 0 1px 3px; background: #000; }
.f37 { flex: none; width: 37px; } .f161 { flex: none; width: 161px; } .f196 { flex: none; width: 196px; } .f204 { flex: none; width: 204px; }
.f210 { flex: none; width: 210px; } .f216 { flex: none; width: 216px; } .f252 { flex: none; width: 252px; }
td .zh { font-size: 13px; }
td .z12 { font-size: 12px; }
.sm { font-size: 11px; }
.mid div { justify-content: center; padding-left: 0; }
.title { font-size: 20px; font-weight: 700; }
.subtitle { font-size: 19px; font-weight: 700; text-decoration: underline; text-decoration-thickness: 2px; }
.strong { font-weight: 700; }
.bb { box-shadow: inset 0 -1px #000; }
.br { box-shadow: inset -1px 0 #000; }
.bb.br { box-shadow: inset -1px -1px #000; }
.bb2 { box-shadow: inset 0 -2px #000; }
.words { font-size: 13px; font-style: italic; }
.sum div { justify-content: flex-end; padding-right: 10px; font-family: "Liberation Mono", monospace; }
.editing { vertical-align: top; }
.editing div { font-size: 11px; height: 17px; }
.caret { width: 1px; height: 14px; background: #000; }
.tick div { justify-content: flex-end; padding-right: 2px; }
.tick input { appearance: none; width: 12px; height: 11px; border: 1px solid #000; background: #fff; }
.tick.low div { align-items: flex-end; }
.logo { position: absolute; left: 34px; top: 45px; }
.note { position: absolute; left: 1142px; top: 250px; color: #f00; font: 19px/24px "Liberation Sans", "Noto Sans CJK SC", sans-serif; }
.note p { margin: 0; }
.note b { font-weight: 400; }
.note span { font: 17px/24px "Open Sans", sans-serif; }

/* scroll bars */
.vscroll { display: flex; flex-direction: column; width: 20px; padding: 2px 3px 0 2px; }
.vscroll button { height: 16px; background: #fff; border: 1px solid #ababab; display: flex; align-items: center; justify-content: center; }
.ar.up, .vscroll .ar { width: 6px; }
.thumb { background: #fff; border: 1px solid #ababab; }
.track { background: #dadada; }
.vscroll .thumb { flex: 315; }
.vscroll .track { flex: 405; }

/* sheet tabs */
.sheettabs { display: flex; align-items: center; flex: none; height: 28px; padding: 0 19px 0 27px; border-bottom: 1px solid #c6c6c6; }
.sheettabs > .plain { margin-right: 24px; }
.sheettab { width: 31px; height: 25px; align-self: flex-start; margin: -1px 34px 0 15px; position: relative; background: #fff; border: 1px solid #999; border-top: 0; border-bottom: 2px solid #217346; color: #217346; font-size: 13px; }
.sheettabs .dots { margin-left: auto; width: 32px; }
.hscroll { display: flex; width: 733px; height: 16px; }
.hscroll button { width: 16px; background: #fff; border: 1px solid #ababab; display: flex; align-items: center; justify-content: center; }
.hscroll .thumb { flex: 1; margin-left: -1px; }
.hscroll .track { width: 27px; margin-right: 2px; }

/* status bar */
.status { display: flex; align-items: center; flex: none; height: 22px; background: #f3f3f3; border-bottom: 1px solid #a9c4b5; padding: 0 9px 0 8px; color: #444; }
.mode { margin-right: auto; }
.view { margin-right: 24px; }
.view + .zoom { margin-left: -8px; }
.status input { appearance: none; width: 100px; height: 8px; margin: 0 3px; background: linear-gradient(#999, #999) center / 100% 1px no-repeat; }
.status input::-webkit-slider-thumb { appearance: none; width: 1px; height: 6px; background: #888; }
.pc { margin-left: 11px; color: #b5b5b5; font-size: 12px; }

/* taskbar */
.taskbar { display: grid; grid-template-columns: 1fr auto 1fr; flex: none; height: 47px; padding: 0 19px; background: #c8eedd; }
.weather { display: flex; align-items: center; gap: 7px; text-align: left; line-height: 16px; padding-bottom: 2px; justify-self: start; }
.weather em { font-style: normal; color: #555; }
.apps { display: flex; align-items: center; gap: 4px; }
.apps button { width: 40px; height: 40px; border-radius: 4px; display: flex; align-items: center; justify-content: center; position: relative; }
.run::after { content: ""; position: absolute; bottom: 1px; width: 6px; height: 3px; border-radius: 2px; background: #75897f; }
.search { display: flex; align-items: center; width: 219px; height: 31px; padding: 0 4px 0 11px; border-radius: 16px; background: #f0f9f5; box-shadow: 0 0 0 1px #b9ddcc; margin: 0 1px; }
.search input { flex: 1; min-width: 0; margin-left: 12px; font-size: 14px; }
.search input::placeholder { color: #555; }
.apps .wechat { background: #e9aca9; }
.wechat::after { content: ""; position: absolute; bottom: 1px; width: 32px; height: 3px; border-radius: 2px; background: #c42b1c; }
.apps .excel { background: #e4f6ee; }
.excel::after { content: ""; position: absolute; bottom: 1px; width: 16px; height: 3px; border-radius: 2px; background: #0078d7; }
.tray { display: flex; align-items: center; justify-content: flex-end; gap: 22px; font-size: 15px; }
.tray .volume { margin-left: -15px; }
.tray .sync { margin-left: -4px; }
.tray .lang { margin-left: -8px; }
.tray time { font-size: 12px; line-height: 16px; text-align: right; margin-left: -9px; }
```
